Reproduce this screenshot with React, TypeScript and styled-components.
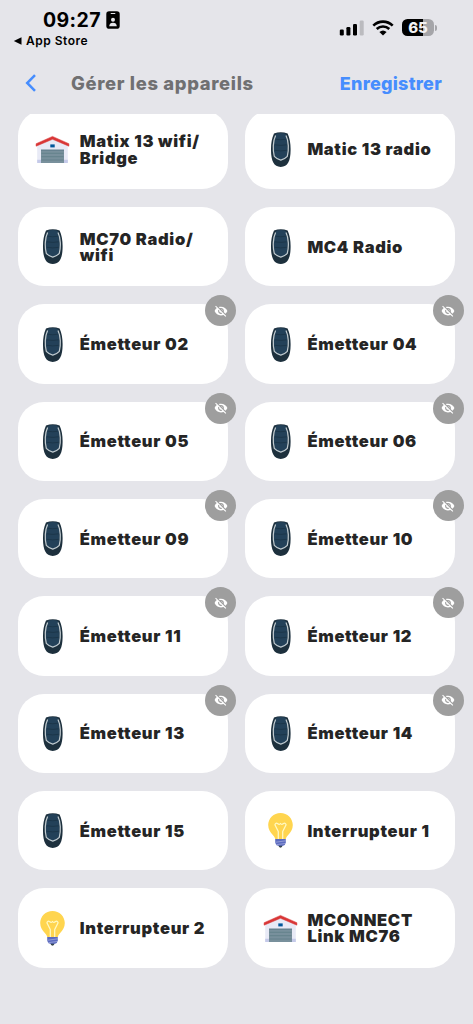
import React from "react";
import styled, { createGlobalStyle } from "styled-components";
import { MdVisibilityOff } from "react-icons/md";

const GlobalStyle = createGlobalStyle`
  * { box-sizing: border-box; }
  body { margin: 0; background: #e5e5ea; font-family: Inter, "Liberation Sans", sans-serif; }
`;

const Screen = styled.div`
  width: 473px;
  height: 1024px;
  overflow: hidden;
  display: flex;
  flex-direction: column;
  background: #e5e5ea;
`;

const StatusBar = styled.div`
  height: 53px;
  display: flex;
  justify-content: space-between;
  padding: 8.5px 36px 0 13px;
`;

const StatusLeft = styled.div`
  display: flex;
  flex-direction: column;
`;

const ClockRow = styled.div`
  display: flex;
  align-items: center;
  gap: 5px;
  height: 23px;
  padding-left: 30px;
`;

const Clock = styled.span`
  font-size: 19.5px;
  font-weight: 700;
  letter-spacing: 0.4px;
  line-height: 23px;
  color: #000;
`;

const BackToApp = styled.div`
  display: flex;
  align-items: center;
  gap: 4px;
  height: 18px;
  font-size: 12px;
  font-weight: 600;
  letter-spacing: 0.5px;
  color: #000;
`;

const StatusIcons = styled.div`
  display: flex;
  align-items: center;
  gap: 8px;
  height: 38px;
`;

const Battery = styled.div`
  display: flex;
  align-items: center;
  gap: 1px;
`;

const BatteryBody = styled.div`
  width: 32px;
  height: 17px;
  border-radius: 5.5px;
  background: linear-gradient(90deg, #000 65%, #a5a5a9 65%);
  color: #f2f2f4;
  font-size: 15px;
  font-weight: 800;
  line-height: 17px;
  text-align: center;
`;

const BatteryTip = styled.div`
  width: 2px;
  height: 6px;
  border-radius: 0 2px 2px 0;
  background: #a5a5a9;
`;

const Header = styled.header`
  height: 61px;
  display: flex;
  align-items: center;
  padding: 0 31px 1.2px 25px;
`;

const Title = styled.h1`
  margin: 0 auto 0 34px;
  font-size: 18.4px;
  font-weight: 800;
  letter-spacing: 0.66px;
  color: #707072;
`;

const SaveButton = styled.button`
  border: 0;
  padding: 1px 0 0;
  background: none;
  font-family: inherit;
  font-size: 18px;
  font-weight: 800;
  letter-spacing: 0.25px;
  color: #468dfe;
`;

const Viewport = styled.main`
  flex: 1;
  overflow: hidden;
`;

const DeviceGrid = styled.div`
  display: grid;
  grid-template-columns: 210px 210px;
  grid-auto-rows: 79.4px;
  gap: 17.95px 17.6px;
  margin: -4.3px 0 0 17.8px;
`;

const Card = styled.article`
  position: relative;
  display: flex;
  align-items: center;
  gap: 9.3px;
  padding-left: 17.7px;
  border-radius: 26px;
  background: #fff;
`;

const DeviceName = styled.span`
  padding-top: 0.6px;
  font-size: 16.5px;
  font-weight: 900;
  letter-spacing: 0.68px;
  line-height: 16.5px;
  color: #252525;
  white-space: pre-line;
`;

const HiddenBadge = styled.div`
  position: absolute;
  top: -9px;
  right: -8.6px;
  width: 31px;
  height: 31px;
  border-radius: 50%;
  display: flex;
  align-items: center;
  justify-content: center;
  background: #9e9e9e;
  color: #fff;
`;

const Remote = () => (
  <svg width="35" height="35" viewBox="0 0 35 35">
    <path d="M11 1.600Q17.800-1.100 24.600 1.600C26.800 6 27.700 12 27.600 18C27.500 29 24.800 34.900 17.800 34.900S8.100 29 8 18C7.900 12 8.800 6 11 1.600Z" fill="#1d303d" />
    <path d="M13 1.800Q17.800 0.200 22.600 1.800C24.600 7 25.400 16 24 24Q22.300 27.200 17.800 28Q13.300 27.200 11.600 24C10.200 16 11 7 13 1.800Z" fill="#234159" />
    <path d="M12.600 3.500C9.900 9 9.600 18 11.300 24.300Q13.800 27 17.800 28.200Q21.800 27 24.300 24.300C26 18 25.700 9 23 3.500" fill="none" stroke="#c1cbd0" strokeWidth="1.250" />
    <path d="M12.300 7.200Q17.800 8.300 23.300 7.200M11.800 12.800Q17.800 14 23.800 12.800M11.800 18.300Q17.800 19.500 23.800 18.300" fill="none" stroke="#1b3447" strokeWidth="0.900" />
  </svg>
);

const Garage = () => (
  <svg width="35" height="35" viewBox="0 0 35 35">
    <path d="M2.200 12L17.500 5L32.800 12V31H2.200Z" fill="#e8eaf6" />
    <path d="M2.200 27.800H6V31H2.200ZM29 27.800H32.800V31H29Z" fill="#c5cae9" />
    <path d="M6 17.700H29V31H6Z" fill="#78909c" />
    <path d="M6 17.700H29V18.700H6Z" fill="#607d8b" />
    <path d="M6.500 21.300H28.500M6.500 24.700H28.500M6.500 28H28.500" stroke="#62808a" strokeWidth="0.900" />
    <path d="M15.300 12.400H19.700V15.400H15.300Z" fill="#01579b" />
    <path d="M1.100 14.200V11.700L17.500 4.400L33.900 11.700V14.200L17.500 7.300Z" fill="#d93636" stroke="#d93636" strokeWidth="0.500" />
  </svg>
);

const Bulb = () => (
  <svg width="35" height="35" viewBox="0 0 35 35">
    <path d="M17.500 0C10.600 0 5.200 5.400 5.200 12.100C5.200 16.400 7.300 19.400 9.600 21.800C11.300 23.600 11.900 24.500 12.200 26H22.800C23.100 24.500 23.700 23.600 25.400 21.800C27.700 19.400 29.800 16.400 29.800 12.100C29.800 5.400 24.400 0 17.500 0Z" fill="#ffd54f" />
    <path d="M15.300 26V18.500L11.900 11.800Q12.600 9.400 14.800 10.700Q16.400 12 17.500 10.500Q18.600 12 20.200 10.700Q22.400 9.400 23.100 11.800L19.700 18.500V26" fill="none" stroke="#fff9c4" strokeWidth="1.250" strokeLinejoin="round" />
    <path d="M15.300 32H19.700Q19.300 34.700 17.500 34.700Q15.700 34.700 15.300 32Z" fill="#37474f" />
    <path d="M12.200 26H22.800V29.500Q22.500 32 20 32.800H15Q12.500 32 12.200 29.500Z" fill="#5c6bc0" />
    <path d="M12.300 29.300L22.700 27.800M13.200 31.700L22 30.500" stroke="#9fa8da" strokeWidth="0.800" />
  </svg>
);

type Kind = "remote" | "garage" | "bulb";
const icons = { remote: Remote, garage: Garage, bulb: Bulb };

interface Device {
  name: string;
  kind: Kind;
  hidden?: boolean;
}

const emitter = (n: string): Device => ({ name: `Émetteur ${n}`, kind: "remote", hidden: true });

const devices: Device[] = [
  { name: "Matix 13 wifi/\nBridge", kind: "garage" },
  { name: "Matic 13 radio", kind: "remote" },
  { name: "MC70 Radio/\nwifi", kind: "remote" },
  { name: "MC4 Radio", kind: "remote" },
  ...["02", "04", "05", "06", "09", "10", "11", "12", "13", "14"].map(emitter),
  { name: "Émetteur 15", kind: "remote" },
  { name: "Interrupteur 1", kind: "bulb" },
  { name: "Interrupteur 2", kind: "bulb" },
  { name: "MCONNECT\nLink MC76", kind: "garage" },
];

const DeviceCard = ({ name, kind, hidden }: Device) => {
  const Icon = icons[kind];
  return (
    <Card>
      <Icon />
      <DeviceName>{name}</DeviceName>
      {hidden && (
        <HiddenBadge>
          <MdVisibilityOff size={14} />
        </HiddenBadge>
      )}
    </Card>
  );
};

export default function App() {
  return (
    <Screen>
      <GlobalStyle />
      <StatusBar>
        <StatusLeft>
          <ClockRow>
            <Clock>09:27</Clock>
            <svg width="14" height="18" viewBox="0 0 14 18">
              <rect x="0.300" y="0.300" width="13.400" height="17.400" rx="2.800" fill="#000" />
              <rect x="4.600" y="1.900" width="4.800" height="1.200" rx="0.600" fill="#e5e5ea" />
              <circle cx="7" cy="8.800" r="2" fill="#e5e5ea" />
              <path d="M3.200 15.200Q3.500 11.800 7 11.800T10.800 15.200Z" fill="#e5e5ea" />
            </svg>
          </ClockRow>
          <BackToApp>
            <svg width="9" height="8" viewBox="0 0 9 8">
              <path d="M0.800 4L8.500 0.200V7.800Z" fill="#000" />
            </svg>
            App Store
          </BackToApp>
        </StatusLeft>
        <StatusIcons>
          <svg width="25" height="16" viewBox="0 0 25 16">
            <rect x="0.800" y="9.500" width="4" height="6" rx="1.200" />
            <rect x="7.400" y="7" width="4" height="8.500" rx="1.200" />
            <rect x="14" y="4" width="4" height="11.500" rx="1.200" />
            <rect x="20.700" y="0.500" width="4" height="15" rx="1.200" fill="#bbbbbf" />
          </svg>
          <svg width="22" height="16" viewBox="0 0 22 16">
            <path d="M1.300 5.600C6.800 0.300 15.200 0.300 20.700 5.600M4.700 9C8.300 5.600 13.700 5.600 17.300 9" fill="none" stroke="#000" strokeWidth="2.600" />
            <path d="M7.400 12Q11 8.900 14.600 12L11 15.600Z" fill="#000" />
          </svg>
          <Battery>
            <BatteryBody>65</BatteryBody>
            <BatteryTip />
          </Battery>
        </StatusIcons>
      </StatusBar>
      <Header>
        <svg width="12" height="18" viewBox="0 0 12 18">
          <path d="M10 1.200L2.200 9L10 16.800" fill="none" stroke="#468dfe" strokeWidth="2.500" />
        </svg>
        <Title>Gérer les appareils</Title>
        <SaveButton>Enregistrer</SaveButton>
      </Header>
      <Viewport>
        <DeviceGrid>
          {devices.map((device) => (
            <DeviceCard key={device.name} {...device} />
          ))}
        </DeviceGrid>
      </Viewport>
    </Screen>
  );
}
